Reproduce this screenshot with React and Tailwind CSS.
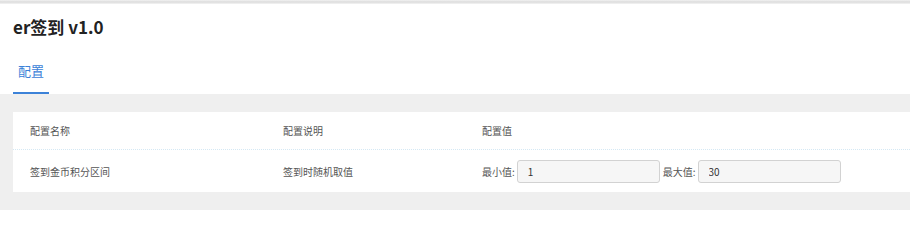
import React from "react";

const font = { fontFamily: '"Noto Sans CJK SC", "Noto Sans", sans-serif' };

export default function App() {
  return (
    <div className="min-h-[210px] w-[910px] bg-[#efefef]" style={font}>
      <div className="bg-white">
        <div className="h-[4px] bg-gradient-to-b from-[#f2f2f2] via-[#dcdcdc] to-[#f4f4f4]" />
        <div className="flex h-[46px] items-center pl-[13px] text-[17px] font-bold text-[#222]">
          er签到 v1.0
        </div>
        <div className="flex pl-[13px]">
          <div className="flex h-[44px] w-[36px] items-center justify-center border-b-2 border-[#3c82d8] text-[13px] text-[#3c82d8]">
            配置
          </div>
        </div>
      </div>
      <div className="pl-[13px] pt-[18px]">
        <div className="bg-white text-[10px] text-[#555]">
          <div className="grid h-[38px] grid-cols-[253px_199px_1fr] items-center border-b border-dotted border-[#d4e8f4] pl-[17px]">
            <div>配置名称</div>
            <div>配置说明</div>
            <div>配置值</div>
          </div>
          <div className="grid h-[42px] grid-cols-[253px_199px_1fr] items-center pl-[17px]">
            <div>签到金币积分区间</div>
            <div>签到时随机取值</div>
            <div className="flex items-center">
              <span>最小值:</span>
              <input
                readOnly
                value="1"
                className="ml-[2px] h-[23px] w-[143px] rounded-[3px] border border-[#d2d2d2] bg-[#f6f6f6] pl-[10px] text-[10px] text-[#333] outline-none"
                style={font}
              />
              <span className="ml-[3px]">最大值:</span>
              <input
                readOnly
                value="30"
                className="ml-[2px] h-[23px] w-[143px] rounded-[3px] border border-[#d2d2d2] bg-[#f6f6f6] pl-[10px] text-[10px] text-[#333] outline-none"
                style={font}
              />
            </div>
          </div>
        </div>
      </div>
    </div>
  );
}
